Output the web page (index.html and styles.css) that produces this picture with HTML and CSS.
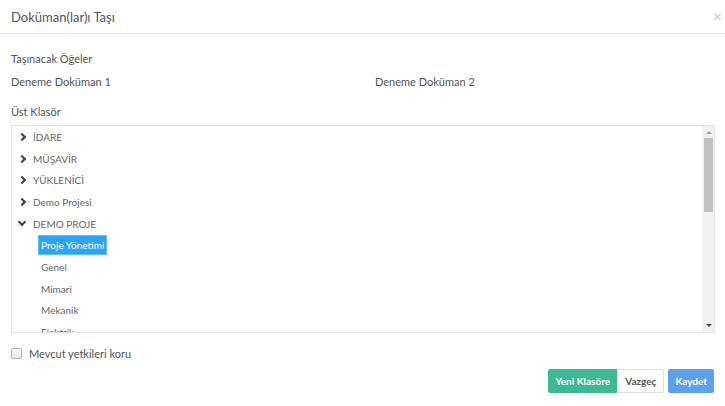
FILE: index.html
```html
<!DOCTYPE html>
<html lang="tr">
<head>
  <meta charset="UTF-8" />
  <title>Doküman(lar)ı Taşı</title>
  <link rel="stylesheet" href="styles.css">
</head>
<body>
  <div class="modal">
    <div class="modal-header">
      <h4 class="modal-title">Doküman(lar)ı Taşı</h4>
      <span class="close">&times;</span>
    </div>
    <div class="modal-body">
      <div class="label">Taşınacak Öğeler</div>
      <div class="items">
        <div class="item">Deneme Doküman 1</div>
        <div class="item">Deneme Doküman 2</div>
      </div>
      <div class="label">Üst Klasör</div>
      <div class="tree-box">
        <ul class="tree">
          <li class="node"><span class="caret right"></span>İDARE</li>
          <li class="node"><span class="caret right"></span>MÜŞAVİR</li>
          <li class="node"><span class="caret right"></span>YÜKLENİCİ</li>
          <li class="node"><span class="caret right"></span>Demo Projesi</li>
          <li class="node"><span class="caret down"></span>DEMO PROJE</li>
          <li class="node child"><span class="selected">Proje Yönetimi</span></li>
          <li class="node child">Genel</li>
          <li class="node child">Mimari</li>
          <li class="node child">Mekanik</li>
          <li class="node child">Elektrik</li>
        </ul>
        <div class="scrollbar">
          <span class="arrow up"></span>
          <div class="track"><div class="thumb"></div></div>
          <span class="arrow down"></span>
        </div>
      </div>
      <label class="check">
        <span class="box"></span>
        Mevcut yetkileri koru
      </label>
    </div>
    <div class="modal-footer">
      <button class="btn btn-green">Yeni Klasöre</button>
      <button class="btn btn-default">Vazgeç</button>
      <button class="btn btn-blue">Kaydet</button>
    </div>
  </div>
</body>
</html>
```

FILE: styles.css
```css
body {
  margin: 0;
  background: #fff;
  font-family: Lato, 'Noto Sans', sans-serif;
  color: #555;
}
.modal {
  width: 725px;
  height: 406px;
}
.modal-header {
  display: flex;
  justify-content: space-between;
  align-items: center;
  height: 33px;
  padding: 0 3px 0 11px;
  border-bottom: 1px solid #e5e5e5;
}
.modal-title {
  margin: 0;
  font-size: 13px;
  font-weight: normal;
  color: #555;
}
.close {
  font-size: 16px;
  color: #c8c8c8;
  margin-top: -2px;
}
.modal-body {
  padding: 16px 10px 0 11px;
}
.label {
  font-size: 11px;
  color: #555;
  line-height: 18px;
}
.items {
  display: flex;
  margin: 5px 0 12px;
}
.item {
  flex-shrink: 0;
  width: 364px;
  font-size: 11px;
  line-height: 18px;
}
.tree-box {
  display: flex;
  margin-top: 4px;
  height: 206px;
  border: 1px solid #e3e3e3;
  overflow: hidden;
}
.tree {
  flex: 1;
  list-style: none;
  margin: 0;
  padding: 0;
  font-family: Lato, 'Noto Sans', sans-serif;
  font-size: 10px;
  color: #666;
  overflow: hidden;
}
.node {
  display: flex;
  align-items: center;
  height: 21.7px;
  padding-left: 7px;
}
.node.child {
  padding-left: 29px;
}
.caret {
  width: 4px;
  height: 4px;
  border-right: 2px solid #444;
  border-bottom: 2px solid #444;
  margin-right: 8px;
}
.caret.right {
  transform: rotate(-45deg);
}
.caret.down {
  transform: rotate(45deg);
  margin-top: -3px;
}
.selected {
  background: #2ba4f5;
  color: #fff;
  padding: 3px 2px;
  margin-left: -3px;
  border: 1px solid #63bcf7;
}
.scrollbar {
  width: 11px;
  display: flex;
  flex-direction: column;
  align-items: center;
  background: #f1f1f1;
  border-left: 1px solid #f1f1f1;
}
.arrow {
  width: 0;
  height: 0;
  border-left: 3px solid transparent;
  border-right: 3px solid transparent;
  margin: 5px 0 4px;
}
.arrow.up {
  border-bottom: 3px solid #a3a3a3;
}
.arrow.down {
  border-top: 3px solid #505050;
  margin: 4px 0 5px;
}
.track {
  flex: 1;
  width: 9px;
}
.thumb {
  height: 74px;
  background: #c1c1c1;
}
.check {
  display: flex;
  align-items: center;
  margin-top: 14px;
  font-size: 11px;
  color: #555;
}
.box {
  width: 9px;
  height: 9px;
  border: 1px solid #b4b4b4;
  border-radius: 2px;
  background: linear-gradient(#fbfbfb, #e8e8e8);
  margin-right: 7px;
}
.modal-footer {
  display: flex;
  justify-content: flex-end;
  padding: 9px 11px 0 0;
}
.btn {
  height: 24px;
  padding: 0 6px;
  font-family: Lato, 'Noto Sans', sans-serif;
  font-size: 10px;
  font-weight: bold;
  border: 1px solid transparent;
  border-radius: 2px;
  cursor: pointer;
}
.btn-green {
  background: #3cb894;
  border-color: #3cb894;
  color: #fff;
  border-radius: 2px 0 0 2px;
}
.btn-default {
  padding: 0 7px;
  background: #fff;
  border-color: #e0e0e0;
  color: #555;
  border-radius: 0 2px 2px 0;
  margin-right: 4px;
}
.btn-blue {
  background: #5ea1eb;
  border-color: #5ea1eb;
  color: #fff;
}
```
